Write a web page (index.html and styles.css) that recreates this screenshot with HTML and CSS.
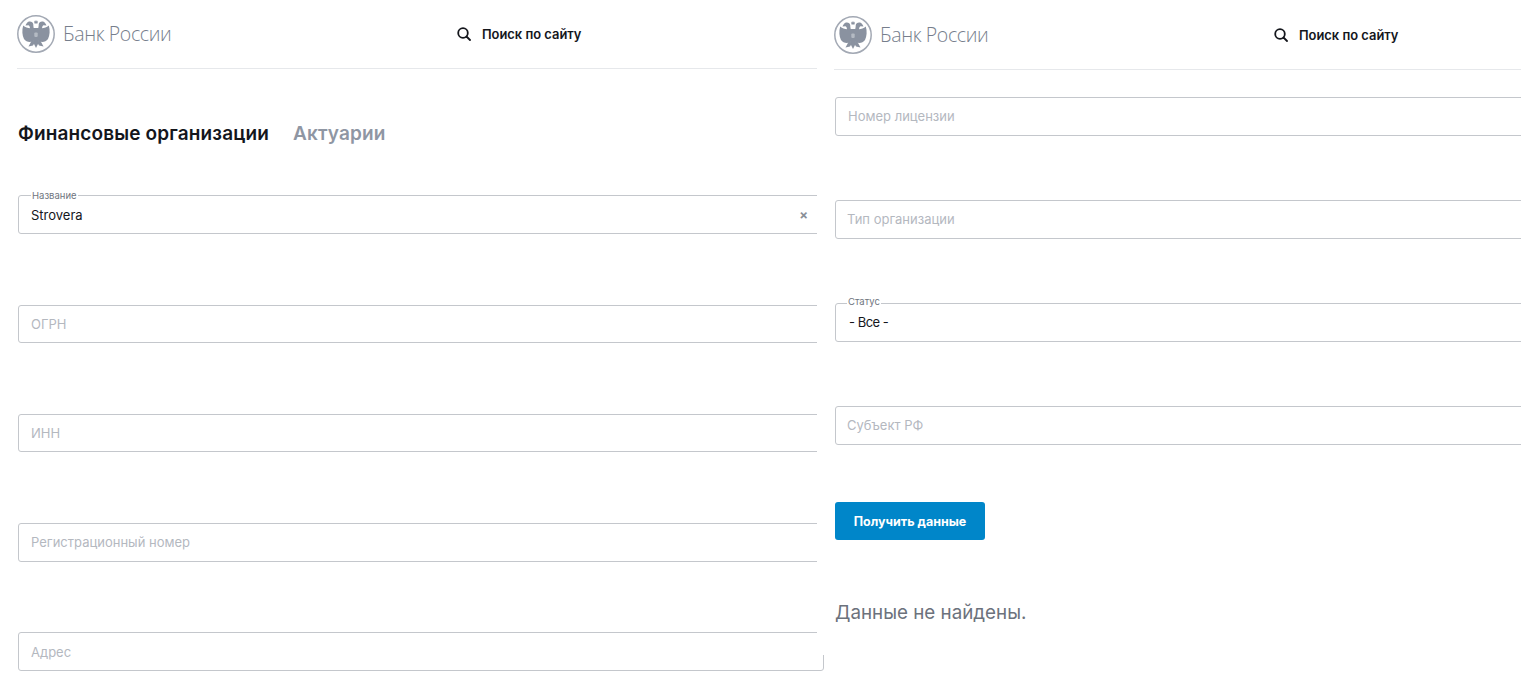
FILE: index.html
```html
<!DOCTYPE html>
<html lang="ru">
<head>
    <meta charset="UTF-8">
    <title>Банк России</title>
    <link rel="stylesheet" href="styles.css">
</head>
<body>
    <div class="shots">
        <div class="shot shot-left">
            <header class="site-header">
                <div class="logo">
                    <svg class="logo-mark" viewBox="0 0 38 38">
                        <g id="bank-mark">
                            <circle cx="19" cy="19" r="18.200" fill="none" stroke="#a3a9b4" stroke-width="1.500"/>
                            <g id="eagle-half" fill="#8a92a0">
                                <path d="M17 14C16.500 12 16.300 11 16.300 9.500 16.300 7 13.800 6 12 6.500 10.200 7 9.500 8.500 8.500 10.500L11.500 10.200C12.500 10.800 13 12 13 14z"/>
                                <path d="M15.500 13C12 13.500 9 13 6.200 10.500 4.800 15 5.200 20.500 7 24 9 27 12.500 27.500 15.500 26.500L19 24V13z"/>
                                <path d="M16 24H19V33L16.500 28z"/>
                                <path d="M15 25L11.500 31.500 16 30.500 18 27z"/>
                                <path d="M17 5.500L18 6.700 19 5V8.500H17.500z"/>
                            </g>
                            <use href="#eagle-half" transform="matrix(-1 0 0 1 38 0)"/>
                            <rect x="17.300" y="17.500" width="3.400" height="4.500" rx="1" fill="#b4bac3"/>
                        </g>
                    </svg>
                    <span class="logo-name">Банк России</span>
                </div>
                <div class="site-search">
                    <svg class="search-icon" viewBox="0 0 14 14">
                        <circle cx="6" cy="6" r="4.800" fill="none" stroke="#14161c" stroke-width="1.800"/>
                        <path d="M9.500 9.500L13 13" stroke="#14161c" stroke-width="1.800" stroke-linecap="round"/>
                    </svg>
                    <span>Поиск по сайту</span>
                </div>
            </header>
            <nav class="tabs">
                <span class="tab active">Финансовые организации</span>
                <span class="tab">Актуарии</span>
            </nav>
            <form class="filter-form">
                <div class="field">
                    <label class="field-label">Название</label>
                    <input type="text" value="Strovera">
                    <span class="field-clear">×</span>
                </div>
                <div class="field"><input type="text" placeholder="ОГРН"></div>
                <div class="field"><input type="text" placeholder="ИНН"></div>
                <div class="field"><input type="text" placeholder="Регистрационный номер"></div>
                <div class="field"><input type="text" placeholder="Адрес"></div>
            </form>
        </div>

        <div class="shot shot-right">
            <header class="site-header">
                <div class="logo">
                    <svg class="logo-mark" viewBox="0 0 38 38">
                        <use href="#bank-mark"/>
                    </svg>
                    <span class="logo-name">Банк России</span>
                </div>
                <div class="site-search">
                    <svg class="search-icon" viewBox="0 0 14 14">
                        <circle cx="6" cy="6" r="4.800" fill="none" stroke="#14161c" stroke-width="1.800"/>
                        <path d="M9.500 9.500L13 13" stroke="#14161c" stroke-width="1.800" stroke-linecap="round"/>
                    </svg>
                    <span>Поиск по сайту</span>
                </div>
            </header>
            <form class="filter-form">
                <div class="field"><input type="text" placeholder="Номер лицензии"></div>
                <div class="field"><input class="tight" type="text" placeholder="Тип организации"></div>
                <div class="field">
                    <label class="field-label">Статус</label>
                    <input class="select-value" type="text" value="- Все -">
                </div>
                <div class="field"><input class="tight" type="text" placeholder="Субъект РФ"></div>
                <button type="button" class="submit">Получить данные</button>
                <p class="no-data">Данные не найдены.</p>
            </form>
        </div>
    </div>
</body>
</html>
```

FILE: styles.css
```css
html, body {
    margin: 0;
    height: 691px;
    overflow: hidden;
    background: white;
}

body {
    font-family: Inter, "Liberation Sans", sans-serif;
    color: #14161c;
}

.shots {
    display: grid;
    grid-template-columns: 817px 704px;
    align-items: start;
}

.shot-left {
    padding-left: 17px;
}

/* the second shot sits over the first one, the last field pokes out under it */
.shot-right {
    position: relative;
    z-index: 1;
    height: 655px;
    padding-top: 1px;
    padding-left: 17px;
    box-sizing: border-box;
    background: white;
    overflow: hidden;
}

.site-header {
    display: flex;
    align-items: center;
    height: 68px;
    border-bottom: 1px solid #e6e8eb;
}

.logo {
    display: flex;
    align-items: center;
    gap: 8px;
    width: 440px;
}

.logo-mark {
    width: 38px;
    height: 38px;
}

.logo-name {
    margin-bottom: 2px;
    font-family: "Open Sans", sans-serif;
    font-weight: 300;
    font-size: 19.5px;
    letter-spacing: -0.4px;
    color: #767e8c;
}

.site-search {
    display: flex;
    align-items: center;
    gap: 11px;
    font-size: 12.9px;
    font-weight: 600;
}

.search-icon {
    width: 14px;
    height: 14px;
}

.tabs {
    display: flex;
    gap: 24px;
    margin-top: 52px;
    padding-left: 1px;
    font-size: 19px;
    line-height: 26px;
    font-weight: 600;
    letter-spacing: 0.14px;
    color: #8f96a3;
}

.tab.active {
    color: #14161c;
}

.shot-left .filter-form {
    display: flex;
    flex-direction: column;
    gap: 70.75px;
    margin-top: 48.4px;
    padding-left: 1px;
}

.shot-right .filter-form {
    display: flex;
    flex-direction: column;
    align-items: flex-start;
    gap: 64.5px;
    margin-top: 27px;
    padding-left: 1px;
}

.field {
    position: relative;
    width: 806px;
}

.field input {
    display: block;
    width: 100%;
    height: 38.5px;
    box-sizing: border-box;
    padding: 0 12px;
    border: 1px solid #c4c7cc;
    border-radius: 3px;
    background: white;
    font-family: inherit;
    font-size: 13px;
    color: #14161c;
}

.field input.tight {
    padding-left: 11px;
}

.field input.select-value {
    padding-left: 13px;
    letter-spacing: -0.5px;
}

.field input::placeholder {
    color: #b4b8bf;
    opacity: 1;
}

.field-label {
    position: absolute;
    left: 13px;
    top: -5px;
    padding: 0 1px;
    background: white;
    font-size: 9.5px;
    line-height: 11px;
    color: #6f7580;
}

.shot-right .field-label {
    left: 12px;
    top: -7px;
}

.field-clear {
    position: absolute;
    right: 16px;
    top: 12px;
    font-size: 13px;
    line-height: 16px;
    font-weight: 700;
    color: #8a8f98;
}

.submit {
    margin-top: -7px;
    width: 150px;
    height: 38px;
    border: none;
    border-radius: 3px;
    background: #0086c9;
    color: white;
    font-family: inherit;
    font-size: 12.5px;
    font-weight: 700;
}

.no-data {
    margin: -4px 0 0;
    font-size: 18.8px;
    line-height: 24px;
    color: #6c727c;
}
```
